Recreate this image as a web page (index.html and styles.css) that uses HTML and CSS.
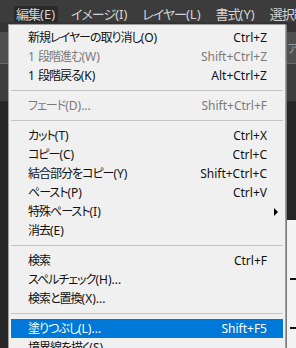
FILE: index.html
```html
<!DOCTYPE html>
<html lang="ja">
<head>
    <meta charset="UTF-8">
    <title>編集メニュー</title>
    <link rel="stylesheet" href="styles.css">
</head>
<body>
    <div class="app">
        <div class="menubar">
            <span class="menubar-item active">編集<span class="mn">(E)</span></span>
            <span class="menubar-item">イメージ<span class="mn">(I)</span></span>
            <span class="menubar-item">レイヤー<span class="mn">(L)</span></span>
            <span class="menubar-item">書式<span class="mn">(Y)</span></span>
            <span class="menubar-item">選択範囲<span class="mn">(S)</span></span>
        </div>
        <div class="strip strip-top"></div>
        <div class="strip strip-opts"><span class="strip-label">ア</span></div>
        <div class="strip strip-tabs"></div>
        <div class="workspace">
            <div class="doc">
                <span class="guide guide-a"></span>
                <span class="guide guide-b"></span>
            </div>
        </div>

        <!-- dropdown of the edit menu -->
        <div class="dropdown">
            <div class="mi"><span class="mi-label">新規レイヤーの取り消し<span class="mn">(O)</span></span><span class="mi-key">Ctrl+Z</span><span></span></div>
            <div class="mi disabled"><span class="mi-label"><span class="mn">1 </span>段階進む<span class="mn">(W)</span></span><span class="mi-key">Shift+Ctrl+Z</span><span></span></div>
            <div class="mi"><span class="mi-label"><span class="mn">1 </span>段階戻る<span class="mn">(K)</span></span><span class="mi-key">Alt+Ctrl+Z</span><span></span></div>
            <div class="sep"></div>
            <div class="mi disabled"><span class="mi-label">フェード<span class="mn">(D)...</span></span><span class="mi-key">Shift+Ctrl+F</span><span></span></div>
            <div class="sep"></div>
            <div class="mi"><span class="mi-label">カット<span class="mn">(T)</span></span><span class="mi-key">Ctrl+X</span><span></span></div>
            <div class="mi"><span class="mi-label">コピー<span class="mn">(C)</span></span><span class="mi-key">Ctrl+C</span><span></span></div>
            <div class="mi"><span class="mi-label">結合部分をコピー<span class="mn">(Y)</span></span><span class="mi-key">Shift+Ctrl+C</span><span></span></div>
            <div class="mi"><span class="mi-label">ペースト<span class="mn">(P)</span></span><span class="mi-key">Ctrl+V</span><span></span></div>
            <div class="mi"><span class="mi-label">特殊ペースト<span class="mn">(I)</span></span><span class="mi-key"></span><span class="mi-arrow"></span></div>
            <div class="mi"><span class="mi-label">消去<span class="mn">(E)</span></span><span class="mi-key"></span><span></span></div>
            <div class="sep"></div>
            <div class="mi"><span class="mi-label">検索</span><span class="mi-key">Ctrl+F</span><span></span></div>
            <div class="mi"><span class="mi-label">スペルチェック<span class="mn">(H)...</span></span><span class="mi-key"></span><span></span></div>
            <div class="mi"><span class="mi-label">検索と置換<span class="mn">(X)...</span></span><span class="mi-key"></span><span></span></div>
            <div class="sep"></div>
            <div class="mi hover"><span class="mi-label">塗りつぶし<span class="mn">(L)...</span></span><span class="mi-key">Shift+F5</span><span></span></div>
            <div class="mi"><span class="mi-label">境界線を描く<span class="mn">(S)...</span></span><span class="mi-key"></span><span></span></div>
        </div>
    </div>
</body>
</html>
```

FILE: styles.css
```css
body {
    margin: 0;
    padding: 0;
    background-color: #262626;
    font-family: "Noto Sans", "Noto Sans CJK JP", sans-serif;
}

.app {
    position: relative;
    width: 296px;
    height: 348px;
    overflow: hidden;
    display: flex;
    flex-direction: column;
}

/* mnemonic / latin part keeps its normal spacing */
.mn {
    letter-spacing: 0;
}

.menubar {
    height: 22px;
    flex: none;
    display: flex;
    align-items: flex-end;
    gap: 11px;
    padding-left: 14px;
    background-color: #3c3c3c;
    white-space: nowrap;
}

.menubar-item {
    height: 16px;
    line-height: 16px;
    padding: 0 2px;
    font-size: 13px;
    font-feature-settings: "palt";
    letter-spacing: -1px;
    color: #d4d4d4;
    box-sizing: border-box;
}

.menubar-item.active {
    background-color: #2a2a2a;
    border-radius: 2px 2px 0 0;
    padding: 0 3px 0 2px;
}

.strip {
    flex: none;
    position: relative;
}

.strip-top {
    height: 10px;
    background-color: #333333;
}

.strip-opts {
    height: 31px;
    background-color: #505050;
    border-bottom: 1px solid #6a6a6a;
    display: flex;
    align-items: center;
    justify-content: flex-end;
}

.strip-label {
    font-size: 12px;
    color: #9a9a9a;
    margin-right: -3px;
}

.strip-tabs {
    height: 37px;
    background-color: #3e3e3e;
    border-bottom: 1px solid #2c2c2c;
}

.workspace {
    flex: 1;
    display: flex;
    justify-content: flex-end;
    background-color: #262626;
}

.doc {
    position: relative;
    width: 60px;
    margin-top: 118px;
    background-color: #f4f4f4;
}

.guide {
    position: absolute;
    right: 0;
    width: 6px;
    height: 2px;
    background-color: #111;
}

.guide-a {
    top: 58px;
}

.guide-b {
    top: 107px;
}

.dropdown {
    position: absolute;
    left: 8px;
    top: 24px;
    width: 278px;
    box-sizing: border-box;
    padding: 3px 2px;
    background-color: #f0f0f0;
    border: 1px solid #a0a0a0;
    box-shadow: 1px 1px 0 #7a7a7a;
}

.mi {
    display: grid;
    grid-template-columns: 1fr auto 16px;
    align-items: center;
    height: 19px;
    padding-left: 17px;
    font-size: 12px;
    line-height: 19px;
    color: #111;
    white-space: nowrap;
}

.mi-label {
    font-feature-settings: "palt";
    letter-spacing: -1px;
}

.mi.disabled {
    color: #7a7a7a;
}

.mi.hover {
    background-color: #0078d7;
    color: #fff;
}

.mi-arrow {
    justify-self: center;
    width: 0;
    height: 0;
    border-top: 4px solid transparent;
    border-bottom: 4px solid transparent;
    border-left: 4px solid #000;
    margin-left: 2px;
}

.sep {
    height: 11px;
    position: relative;
}

.sep::after {
    content: "";
    position: absolute;
    left: 0;
    right: 0;
    top: 5px;
    height: 1px;
    background-color: #c4c4c4;
}
```
